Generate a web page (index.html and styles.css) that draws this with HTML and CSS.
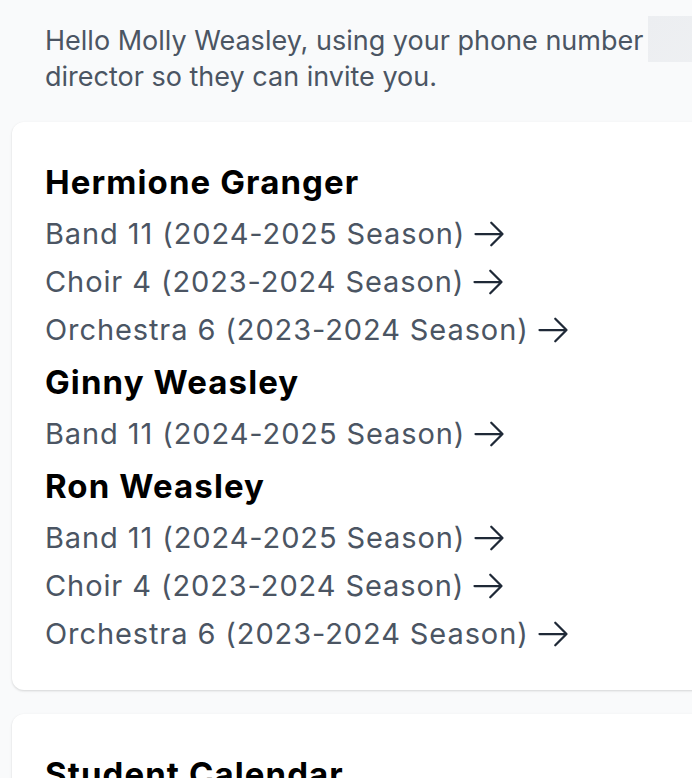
FILE: index.html
```html
<!DOCTYPE html>
<html lang="en">
<head>
<meta charset="utf-8">
<title>Students</title>
<link rel="stylesheet" href="styles.css">
</head>
<body>
<div class="page">
  <p class="intro">Hello Molly Weasley, using your phone number<span class="skeleton"></span> share it with your<br>director so they can invite you.</p>

  <section class="card">
    <h2 class="student">Hermione Granger</h2>
    <a class="group" href="#"><span>Band 11 (2024-2025 Season)</span><svg class="arrow" viewBox="0 0 24 24" fill="none" stroke="currentColor" stroke-width="1.5"><path stroke-linecap="round" stroke-linejoin="round" d="M13.5 4.5 21 12m0 0-7.5 7.5M21 12H3"/></svg></a>
    <a class="group" href="#"><span>Choir 4 (2023-2024 Season)</span><svg class="arrow" viewBox="0 0 24 24" fill="none" stroke="currentColor" stroke-width="1.5"><path stroke-linecap="round" stroke-linejoin="round" d="M13.5 4.5 21 12m0 0-7.5 7.5M21 12H3"/></svg></a>
    <a class="group" href="#"><span>Orchestra 6 (2023-2024 Season)</span><svg class="arrow" viewBox="0 0 24 24" fill="none" stroke="currentColor" stroke-width="1.5"><path stroke-linecap="round" stroke-linejoin="round" d="M13.5 4.5 21 12m0 0-7.5 7.5M21 12H3"/></svg></a>
    <h2 class="student">Ginny Weasley</h2>
    <a class="group" href="#"><span>Band 11 (2024-2025 Season)</span><svg class="arrow" viewBox="0 0 24 24" fill="none" stroke="currentColor" stroke-width="1.5"><path stroke-linecap="round" stroke-linejoin="round" d="M13.5 4.5 21 12m0 0-7.5 7.5M21 12H3"/></svg></a>
    <h2 class="student">Ron Weasley</h2>
    <a class="group" href="#"><span>Band 11 (2024-2025 Season)</span><svg class="arrow" viewBox="0 0 24 24" fill="none" stroke="currentColor" stroke-width="1.5"><path stroke-linecap="round" stroke-linejoin="round" d="M13.5 4.5 21 12m0 0-7.5 7.5M21 12H3"/></svg></a>
    <a class="group" href="#"><span>Choir 4 (2023-2024 Season)</span><svg class="arrow" viewBox="0 0 24 24" fill="none" stroke="currentColor" stroke-width="1.5"><path stroke-linecap="round" stroke-linejoin="round" d="M13.5 4.5 21 12m0 0-7.5 7.5M21 12H3"/></svg></a>
    <a class="group" href="#"><span>Orchestra 6 (2023-2024 Season)</span><svg class="arrow" viewBox="0 0 24 24" fill="none" stroke="currentColor" stroke-width="1.5"><path stroke-linecap="round" stroke-linejoin="round" d="M13.5 4.5 21 12m0 0-7.5 7.5M21 12H3"/></svg></a>
  </section>

  <section class="card">
    <h2 class="student">Student Calendar</h2>
  </section>
</div>
</body>
</html>
```

FILE: styles.css
```css
html, body {
  margin: 0;
  padding: 0;
  background: #f9fafb;
  overflow: hidden;
}

body {
  font-family: Inter, "Noto Sans", "DejaVu Sans", sans-serif;
  -webkit-font-smoothing: antialiased;
}

.page {
  padding: 0 0 0 12px;
  overflow: hidden;
}

.intro {
  margin: 0 0 27px 0;
  padding: 23px 0 0 33px;
  font-size: 27px;
  line-height: 36px;
  color: #4b5563;
  white-space: nowrap;
}

.skeleton {
  display: inline-block;
  width: 160px;
  height: 46px;
  margin: -7px 0 -3px 5px;
  vertical-align: top;
  background: linear-gradient(135deg, #eceef1, #f0f1f3);
}

.card {
  background: #ffffff;
  border-radius: 12px;
  box-shadow: 0 1px 3px rgba(0, 0, 0, 0.1), 0 1px 2px rgba(0, 0, 0, 0.06);
  padding: 38px 33px;
  margin-right: -40px;
  margin-bottom: 24px;
  display: flex;
  flex-direction: column;
  align-items: flex-start;
  gap: 12px;
}

.student {
  margin: 0;
  font-size: 33px;
  line-height: 44px;
  font-weight: 700;
  letter-spacing: 1.1px;
  color: #000000;
  white-space: nowrap;
}

.group {
  display: inline-flex;
  align-items: center;
  gap: 6px;
  font-size: 29px;
  line-height: 36px;
  letter-spacing: 0.9px;
  color: #4b5563;
  text-decoration: none;
  white-space: nowrap;
}

.arrow {
  width: 36px;
  height: 36px;
  flex: none;
  color: #1f2937;
}
```
